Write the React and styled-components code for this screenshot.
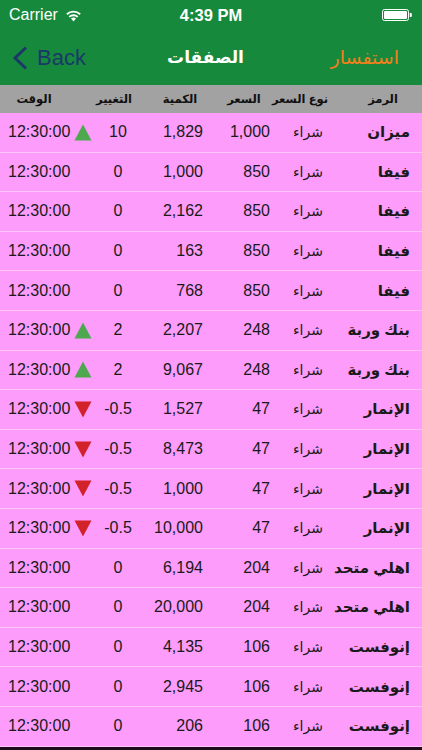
import styled, { createGlobalStyle } from "styled-components";

const GlobalStyle = createGlobalStyle`
  html, body {
    margin: 0;
    padding: 0;
    background: #1c0c1c;
  }
  body {
    font-family: "Liberation Sans", "DejaVu Sans", sans-serif;
  }
`;

const trades = [
  { symbol: "ميزان", price: "1,000", qty: "1,829", change: "10", dir: "up" },
  { symbol: "فيفا", price: "850", qty: "1,000", change: "0" },
  { symbol: "فيفا", price: "850", qty: "2,162", change: "0" },
  { symbol: "فيفا", price: "850", qty: "163", change: "0" },
  { symbol: "فيفا", price: "850", qty: "768", change: "0" },
  { symbol: "بنك وربة", price: "248", qty: "2,207", change: "2", dir: "up" },
  { symbol: "بنك وربة", price: "248", qty: "9,067", change: "2", dir: "up" },
  { symbol: "الإنمار", price: "47", qty: "1,527", change: "-0.5", dir: "down" },
  { symbol: "الإنمار", price: "47", qty: "8,473", change: "-0.5", dir: "down" },
  { symbol: "الإنمار", price: "47", qty: "1,000", change: "-0.5", dir: "down" },
  { symbol: "الإنمار", price: "47", qty: "10,000", change: "-0.5", dir: "down" },
  { symbol: "اهلي متحد", price: "204", qty: "6,194", change: "0" },
  { symbol: "اهلي متحد", price: "204", qty: "20,000", change: "0" },
  { symbol: "إنوفست", price: "106", qty: "4,135", change: "0" },
  { symbol: "إنوفست", price: "106", qty: "2,945", change: "0" },
  { symbol: "إنوفست", price: "106", qty: "206", change: "0" },
];

const Screen = styled.div`
  width: 422px;
  display: flex;
  flex-direction: column;
`;

const TopBar = styled.div`
  background: #17893d;
  display: flex;
  flex-direction: column;
`;

const StatusBar = styled.div`
  height: 30px;
  display: grid;
  grid-template-columns: 1fr auto 1fr;
  align-items: center;
  padding: 0 9px;
  color: #fff;
  font-size: 16px;
`;

const StatusLeft = styled.div`
  display: flex;
  align-items: center;
  gap: 7px;
`;

const StatusTime = styled.div`
  font-weight: bold;
  font-size: 16.5px;
`;

const StatusRight = styled.div`
  display: flex;
  justify-content: flex-end;
  padding-right: 1px;
`;

const NavBar = styled.div`
  height: 55px;
  display: grid;
  grid-template-columns: 1fr auto 1fr;
  align-items: center;
  padding: 0 23px 0 12px;
`;

const BackButton = styled.div`
  display: flex;
  align-items: center;
  gap: 9px;
  color: #1b3869;
  font-size: 22px;
`;

const Title = styled.div`
  color: #fff;
  font-size: 17px;
  font-weight: bold;
  direction: rtl;
`;

const Inquiry = styled.div`
  color: #f07f1c;
  font-size: 19px;
  direction: rtl;
  text-align: right;
  justify-self: end;
`;

const HeaderRow = styled.div`
  height: 28px;
  background: #a2a2a2;
  display: grid;
  grid-template-columns: 68px 92px 40px 88px 24px 1fr 78px;
  align-items: center;
  font-size: 11.5px;
  font-weight: bold;
  color: #111;
`;

const HeadCell = styled.div`
  grid-column: ${(p) => p.$col};
  justify-self: center;
  white-space: nowrap;
  direction: rtl;
`;

const Row = styled.div`
  height: 39.6px;
  box-sizing: border-box;
  background: #fd9cfb;
  border-bottom: 1px solid #ffc6fe;
  display: grid;
  grid-template-columns: 64px 22px 48px 61px 67px 76px 64px;
  padding: 0 12px 0 8px;
  align-items: center;
  color: #1a1a1a;
  font-size: 16px;
  white-space: nowrap;
`;

const Cell = styled.div`
  text-align: ${(p) => p.$align || "left"};
`;

const ArrowCell = styled.div`
  display: flex;
  justify-content: center;
  align-items: center;
`;

const TypeCell = styled.div`
  text-align: center;
  direction: rtl;
  font-size: 14px;
`;

const SymbolCell = styled.div`
  direction: rtl;
  text-align: right;
  font-weight: bold;
  font-size: 15px;
`;

const Wifi = () => (
  <svg width="17" height="13" viewBox="0 0 17 13">
    <path d="M8.5 12.5 L6 9.6 A3.6 3.6 0 0 1 11 9.6 Z" fill="#fff" />
    <path d="M3.6 7.2 A7 7 0 0 1 13.4 7.2 L12.1 8.6 A5.2 5.2 0 0 0 4.9 8.6 Z" fill="#fff" />
    <path d="M1.2 4.6 A10.5 10.5 0 0 1 15.8 4.6 L14.5 6 A8.6 8.6 0 0 0 2.5 6 Z" fill="#fff" />
  </svg>
);

const Battery = () => (
  <svg width="30" height="12" viewBox="0 0 30 12">
    <rect x="0.5" y="0.5" width="26" height="11" rx="2" fill="none" stroke="#fff" />
    <rect x="2" y="2" width="23" height="8" rx="1" fill="#fff" />
    <path d="M27.8 4 h1 a1 1 0 0 1 1 1 v2 a1 1 0 0 1 -1 1 h-1 z" fill="#fff" />
  </svg>
);

const Chevron = () => (
  <svg width="16" height="24" viewBox="0 0 16 24">
    <path d="M14 1.5 L3 12 L14 22.5" fill="none" stroke="#1b3869" strokeWidth="3" />
  </svg>
);

const Arrow = ({ dir }) =>
  dir === "up" ? (
    <svg width="18" height="17" viewBox="0 0 18 17">
      <path d="M9 0.5 L17.5 16.5 L0.5 16.5 Z" fill="#4da84f" />
    </svg>
  ) : (
    <svg width="18" height="17" viewBox="0 0 18 17">
      <path d="M0.5 0.5 L17.5 0.5 L9 16.5 Z" fill="#d2232a" />
    </svg>
  );

export default function App() {
  return (
    <Screen>
      <GlobalStyle />
      <TopBar>
        <StatusBar>
          <StatusLeft>
            Carrier <Wifi />
          </StatusLeft>
          <StatusTime>4:39 PM</StatusTime>
          <StatusRight>
            <Battery />
          </StatusRight>
        </StatusBar>
        <NavBar>
          <BackButton>
            <Chevron />
            Back
          </BackButton>
          <Title>الصفقات</Title>
          <Inquiry>استفسار</Inquiry>
        </NavBar>
      </TopBar>
      <HeaderRow>
        <HeadCell $col={1}>الوقت</HeadCell>
        <HeadCell $col={2}>التغيير</HeadCell>
        <HeadCell $col={3}>الكمية</HeadCell>
        <HeadCell $col={4}>السعر</HeadCell>
        <HeadCell $col={5}>نوع السعر</HeadCell>
        <HeadCell $col={7}>الرمز</HeadCell>
      </HeaderRow>
      {trades.map((t, i) => (
        <Row key={i}>
          <Cell>12:30:00</Cell>
          <ArrowCell>{t.dir && <Arrow dir={t.dir} />}</ArrowCell>
          <Cell $align="center">{t.change}</Cell>
          <Cell $align="right">{t.qty}</Cell>
          <Cell $align="right">{t.price}</Cell>
          <TypeCell>شراء</TypeCell>
          <SymbolCell>{t.symbol}</SymbolCell>
        </Row>
      ))}
    </Screen>
  );
}
